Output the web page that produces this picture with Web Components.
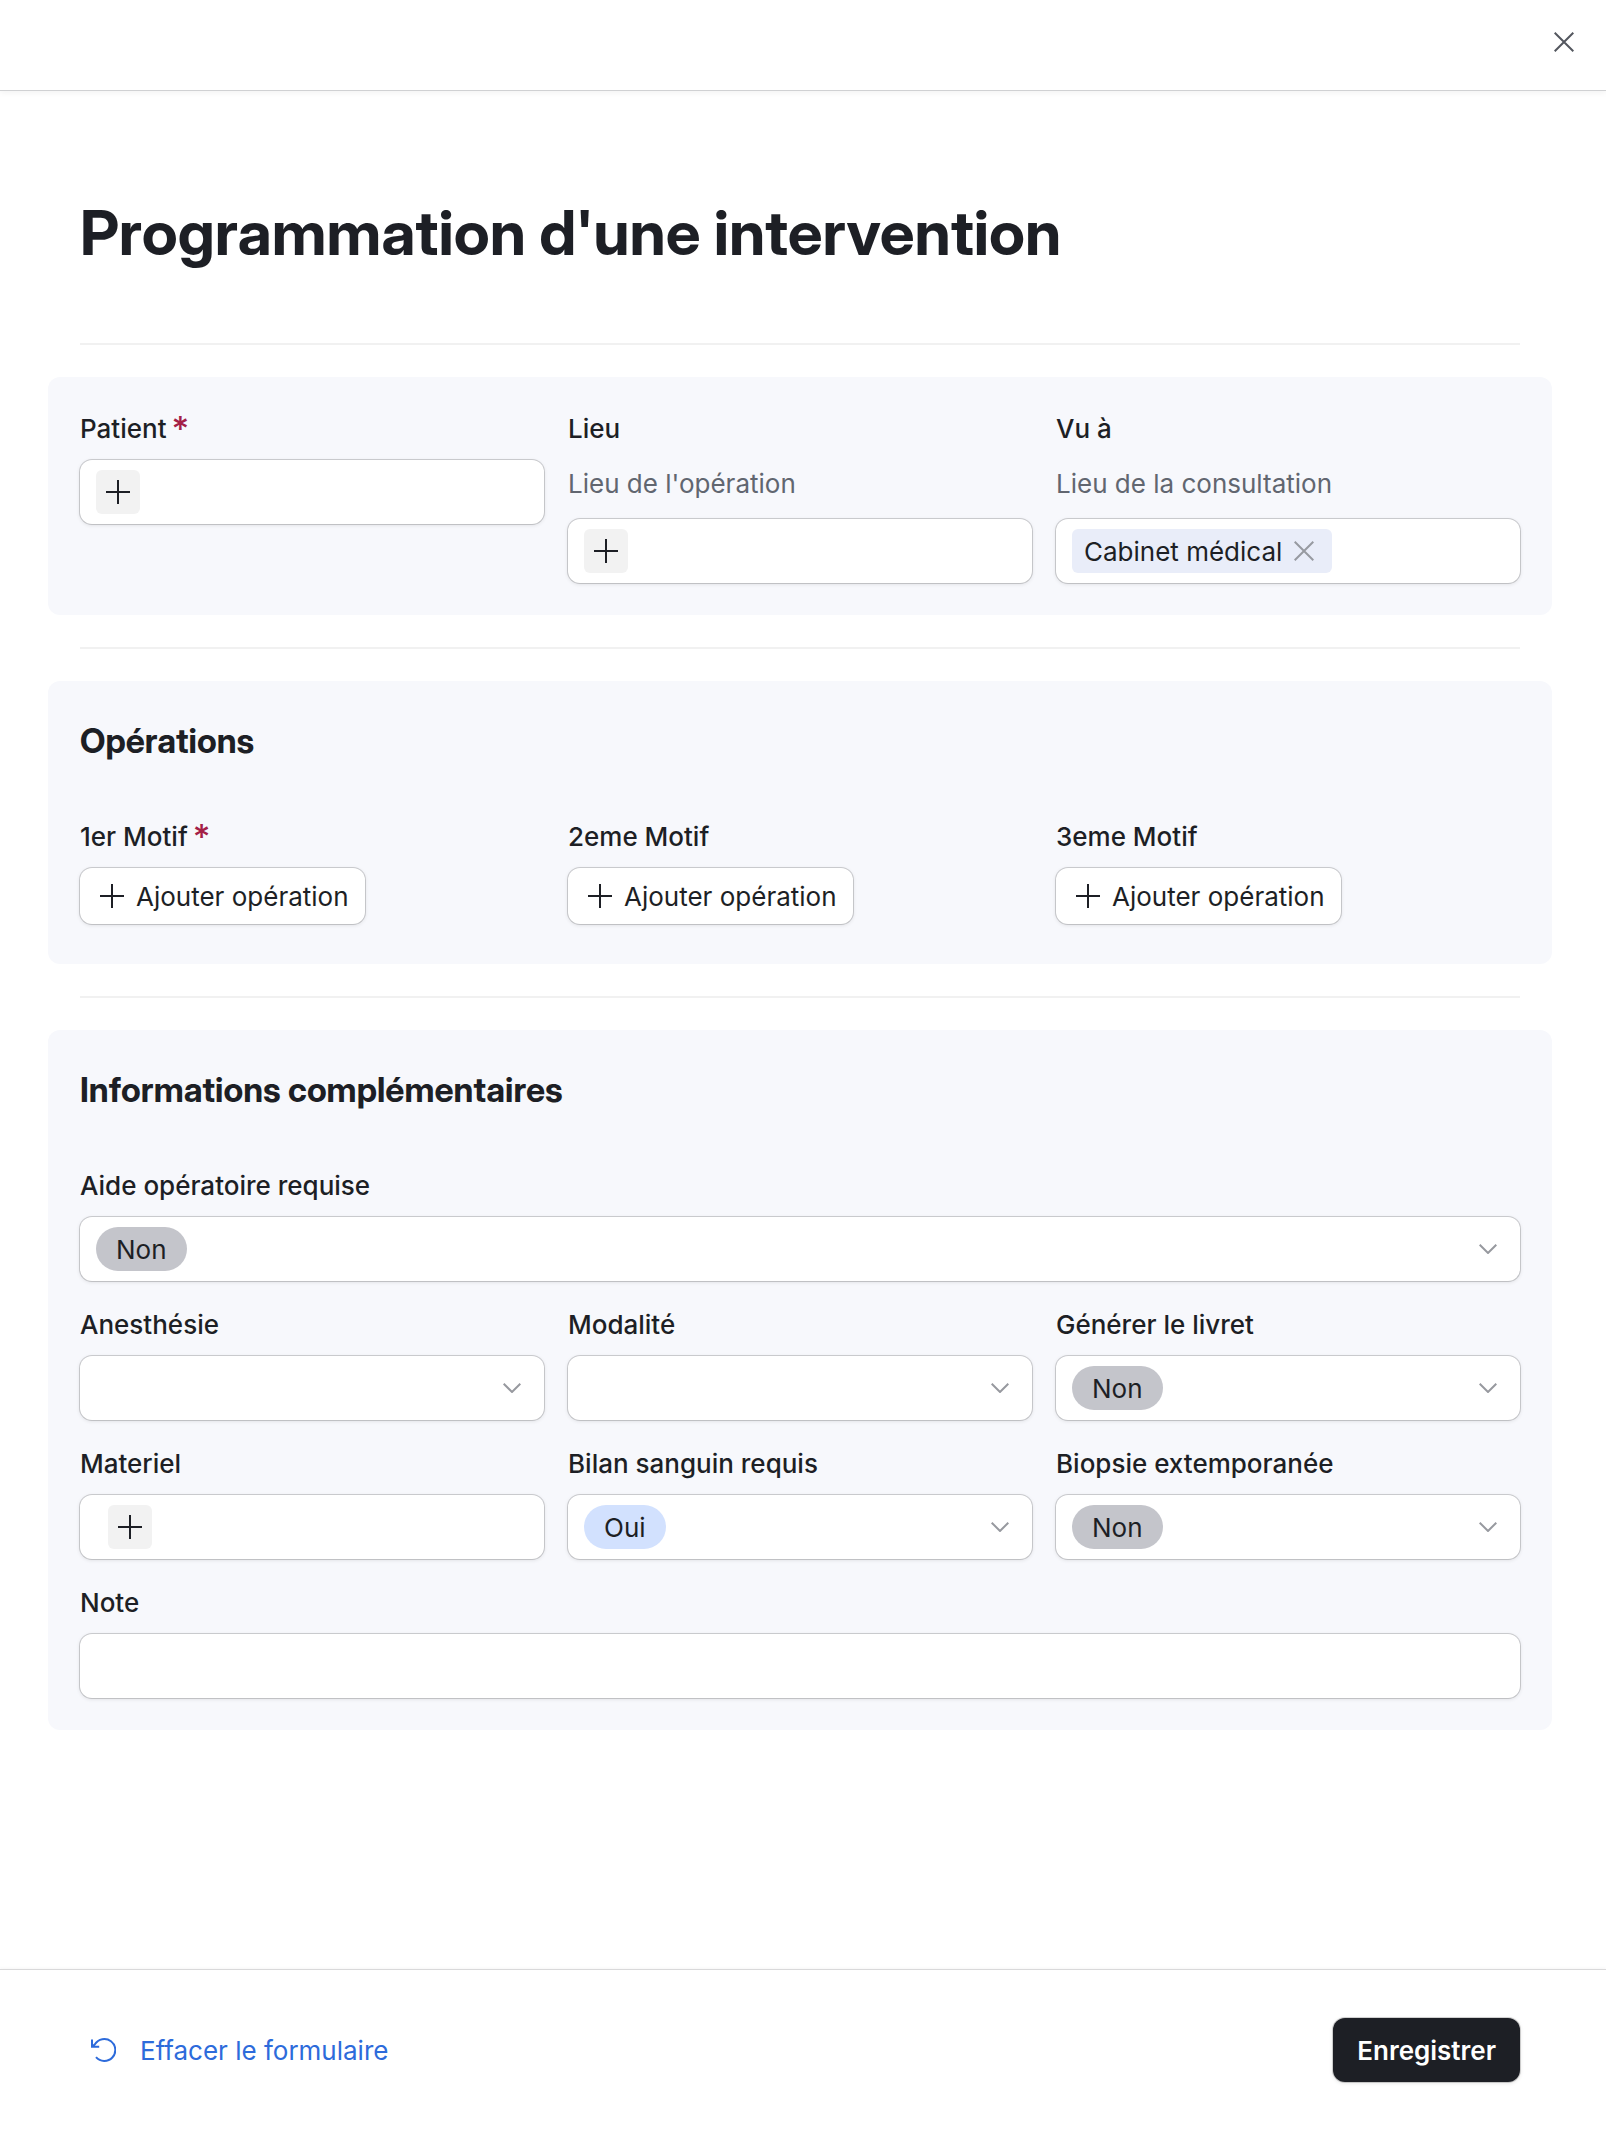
<!DOCTYPE html>
<html lang="fr">
<head>
<meta charset="utf-8">
<meta name="viewport" content="width=device-width, initial-scale=1">
<title>Programmation d'une intervention</title>
<style>
  html, body { margin: 0; }
  body {
    --ink: #1d1f25;
    --muted: #616670;
    --panel: #f7f8fc;
    --display: "Inter Display", Inter, "Liberation Sans", sans-serif;
    --ring: 0 0 0 1px rgba(0, 0, 0, .16), 0 1px 4px rgba(0, 0, 0, .12);
    font: 400 26px/39px Inter, "Liberation Sans", sans-serif;
    font-variation-settings: "opsz" 17;
    color: var(--ink);
    background: #fff;
  }
</style>
</head>
<body>
<record-form>
  <form-header slot="header"></form-header>
  <h1 slot="title">Programmation d'une intervention</h1>

  <form-panel>
    <form-row>
      <link-field label="Patient" required></link-field>
      <link-field label="Lieu" hint="Lieu de l'opération"></link-field>
      <link-field label="Vu à" hint="Lieu de la consultation" value="Cabinet médical"></link-field>
    </form-row>
  </form-panel>

  <form-panel heading="Opérations" class="actions">
    <form-row>
      <action-field label="1er Motif" required>Ajouter opération</action-field>
      <action-field label="2eme Motif">Ajouter opération</action-field>
      <action-field label="3eme Motif">Ajouter opération</action-field>
    </form-row>
  </form-panel>

  <form-panel heading="Informations complémentaires">
    <form-row>
      <select-field label="Aide opératoire requise" value="Non"></select-field>
    </form-row>
    <form-row>
      <select-field label="Anesthésie" options="Locale,Générale"></select-field>
      <select-field label="Modalité" options="Ambulatoire,Hospitalisation"></select-field>
      <select-field label="Générer le livret" value="Non"></select-field>
    </form-row>
    <form-row>
      <link-field label="Materiel" indent></link-field>
      <select-field label="Bilan sanguin requis" value="Oui"></select-field>
      <select-field label="Biopsie extemporanée" value="Non"></select-field>
    </form-row>
    <form-row>
      <text-field label="Note"></text-field>
    </form-row>
  </form-panel>

  <form-footer slot="footer"></form-footer>
</record-form>

<script>
const BASE = `
  *, *::before, *::after { box-sizing: border-box; }
  button, input, select { font: inherit; color: inherit; margin: 0; border: 0; padding: 0; background: none; }
  button { cursor: pointer; }
  svg { display: block; flex: none; fill: none; stroke: currentColor; stroke-width: 2; }
`;

const FIELD = `
  :host { display: block; flex: 1 1 0; min-width: 0; }
  .label { display: flex; gap: 5px; font-weight: 500; margin-bottom: 12px; }
  .label i { font-style: normal; font-size: 34px; font-weight: 500; color: #a42046; }
  .hint { color: var(--muted); margin: 16px 0; }
  .box {
    display: flex; align-items: center; height: 64px; padding: 0 16px;
    border-radius: 12px; background: #fff; box-shadow: var(--ring);
  }
`;

const PLUS = `<svg width="24" height="24" viewBox="0 0 24 24" aria-hidden="true"><path d="M12 0v24M0 12h24"/></svg>`;
const CROSS = `<svg width="20" height="20" viewBox="0 0 20 20" aria-hidden="true"><path d="M.7.7l18.6 18.6M19.3.7L.7 19.3"/></svg>`;

class Part extends HTMLElement {
  connectedCallback() {
    if (this.shadowRoot) return;
    this.attachShadow({ mode: "open" }).innerHTML =
      `<style>${BASE}${this.constructor.css || ""}</style>${this.render()}`;
    this.ready();
  }
  render() { return "<slot></slot>"; }
  ready() {}
  get star() { return this.hasAttribute("required") ? `<i aria-hidden="true">*</i>` : ""; }
  attr(name) { return this.getAttribute(name) || ""; }
}

customElements.define("record-form", class extends Part {
  static css = `
    :host { display: flex; flex-direction: column; min-height: 100vh; }
    main { flex: 1; padding: 104px 54px 80px 48px; }
    ::slotted(h1) {
      margin: 0 32px 72px; font-family: var(--display); font-size: 62px; line-height: 76px;
      font-weight: 650; font-variation-settings: "opsz" 32;
    }
  `;
  render() {
    return `<slot name="header"></slot><main><slot name="title"></slot><slot></slot></main><slot name="footer"></slot>`;
  }
});

customElements.define("form-header", class extends Part {
  static css = `
    :host {
      display: flex; justify-content: flex-end; align-items: center; height: 91px;
      box-sizing: border-box; padding: 0 20px 7px; border-bottom: 1px solid #d0d1d3;
      box-shadow: 0 2px 6px rgba(0, 0, 0, .05);
    }
    button { display: grid; place-items: center; width: 44px; height: 44px; color: #54575f; }
  `;
  render() { return `<button type="button" aria-label="Fermer">${CROSS}</button>`; }
});

customElements.define("form-panel", class extends Part {
  static css = `
    :host { display: block; }
    hr { margin: 0 32px 32px; border: 0; height: 2px; background: #f1f1f1; }
    section {
      display: flex; flex-direction: column; gap: 24px; margin-bottom: 32px;
      padding: 32px; border-radius: 12px; background: var(--panel);
    }
    :host(.actions) section { padding-bottom: 40px; }
    h2 {
      margin: 0 0 24px; font-family: var(--display); font-size: 34px; line-height: 56px;
      font-weight: 650; font-variation-settings: "opsz" 32;
    }
  `;
  render() {
    const heading = this.attr("heading");
    return `<hr><section>${heading ? `<h2>${heading}</h2>` : ""}<slot></slot></section>`;
  }
});

customElements.define("form-row", class extends Part {
  static css = `:host { display: flex; align-items: flex-start; gap: 24px; }`;
});

customElements.define("link-field", class extends Part {
  static css = FIELD + `
    .add { display: grid; place-items: center; width: 44px; height: 44px; border-radius: 6px; background: #f2f2f2; }
    :host([indent]) .add { margin-left: 12px; }
    .chip { display: flex; align-items: center; gap: 12px; height: 44px; padding: 0 18px 0 12px; border-radius: 6px; background: #e9edf9; }
    .chip button { color: #979aa1; }
  `;
  render() {
    const value = this.attr("value"), hint = this.attr("hint");
    return `
      <div class="label" id="label">${this.attr("label")}${this.star}</div>
      ${hint ? `<div class="hint">${hint}</div>` : ""}
      <div class="box" role="group" aria-labelledby="label">${value
        ? `<span class="chip">${value}<button type="button" aria-label="Retirer">${CROSS}</button></span>`
        : `<button type="button" class="add" aria-labelledby="label">${PLUS}</button>`}
      </div>`;
  }
});

customElements.define("action-field", class extends Part {
  static css = FIELD + `
    button {
      display: inline-flex; align-items: center; gap: 12px; height: 56px; padding: 0 16px 0 20px;
      border-radius: 12px; background: #fff; box-shadow: var(--ring); vertical-align: top;
    }
  `;
  render() {
    return `
      <div class="label" id="label">${this.attr("label")}${this.star}</div>
      <button type="button" aria-describedby="label">${PLUS}<slot></slot></button>`;
  }
});

customElements.define("select-field", class extends Part {
  static css = FIELD + `
    .box { justify-content: space-between; gap: 16px; padding-right: 23px; }
    select { appearance: none; flex: 1; height: 44px; outline: 0; cursor: pointer; }
    select.pill { flex: none; field-sizing: content; padding: 0 20px; border-radius: 22px; background: #c4c5cb; }
    select.oui { background: #d2e1fe; }
    svg { color: #97999f; }
  `;
  render() {
    const value = this.attr("value");
    const options = (this.attr("options") || "Non,Oui").split(",");
    return `
      <label class="label" for="control">${this.attr("label")}</label>
      <div class="box">
        <select id="control" class="${value ? "pill " + value.toLowerCase() : ""}">
          ${value ? "" : "<option selected></option>"}
          ${options.map(o => `<option${o === value ? " selected" : ""}>${o}</option>`).join("")}
        </select>
        <svg width="18" height="10" viewBox="0 0 18 10" aria-hidden="true"><path d="M.7.7L9 9 17.3.7"/></svg>
      </div>`;
  }
  ready() {
    const select = this.shadowRoot.querySelector("select");
    this.shadowRoot.querySelector(".box").addEventListener("click", e => {
      if (e.target !== select) select.showPicker();
    });
    select.addEventListener("change", () => {
      select.className = select.value ? "pill " + select.value.toLowerCase() : "";
    });
  }
});

customElements.define("text-field", class extends Part {
  static css = FIELD + `input { width: 100%; outline: 0; } input.box { padding: 0 16px; background: #fff; }`;
  render() {
    return `<label class="label" for="control">${this.attr("label")}</label>
      <input class="box" id="control" type="text">`;
  }
});

customElements.define("form-footer", class extends Part {
  static css = `
    :host {
      display: flex; justify-content: space-between; align-items: center; height: 161px;
      box-sizing: border-box; padding: 0 86px 0 90px; border-top: 1px solid #d9d9da;
      box-shadow: 0 -1px 3px rgba(0, 0, 0, .04);
    }
    .reset { display: flex; align-items: center; gap: 24px; color: #2d6bdb; }
    .save {
      height: 64px; padding: 0 24px; border-radius: 12px; font-weight: 600;
      color: #fff; background: var(--ink); box-shadow: var(--ring);
    }
  `;
  render() {
    return `
      <button type="button" class="reset">
        <svg width="26" height="26" viewBox="0 0 26 26" aria-hidden="true"><path d="M2 2.500v7.200h7.200M2.200 9.500L4.900 7.300A11 11 0 1 1 6 20.200"/></svg>
        Effacer le formulaire
      </button>
      <button type="submit" class="save">Enregistrer</button>`;
  }
});
</script>
</body>
</html>
